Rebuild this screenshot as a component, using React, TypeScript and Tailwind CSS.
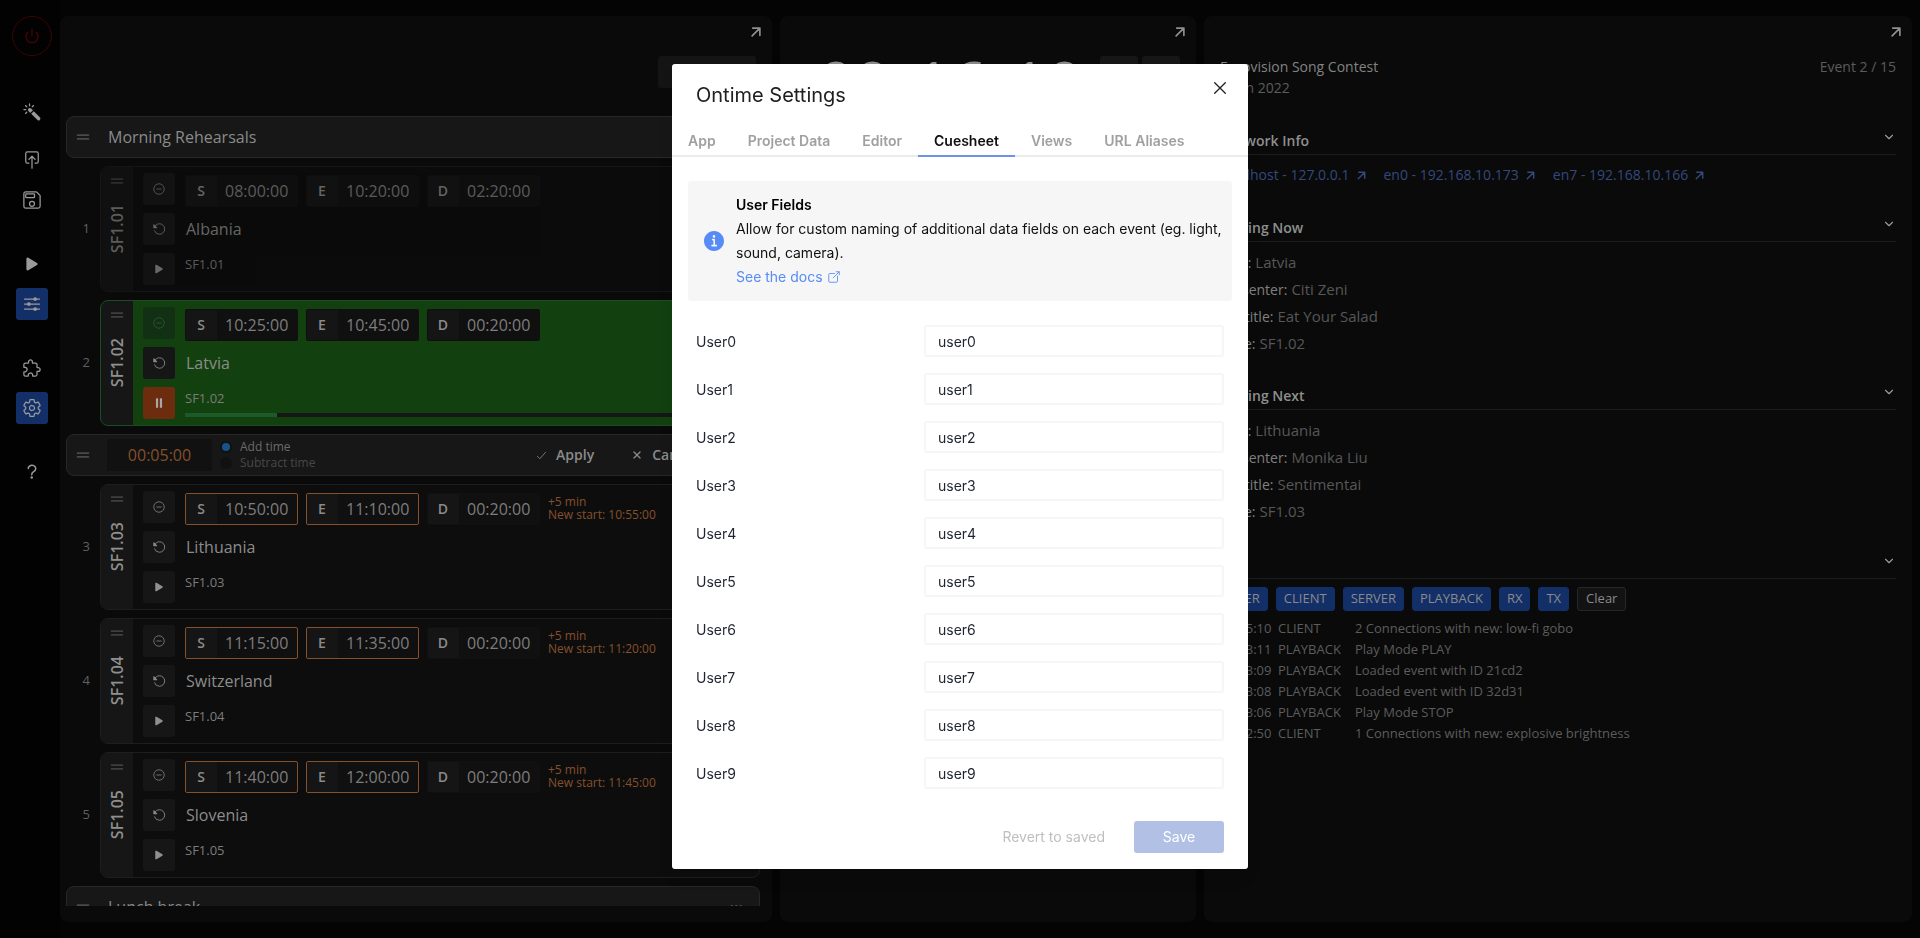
import React from 'react';
import { FiChevronDown, FiPower } from 'react-icons/fi';
import {
  IoArrowUp,
  IoCheckmark,
  IoClose,
  IoColorWand,
  IoExtensionPuzzleOutline,
  IoHelp,
  IoOpenOutline,
  IoOptions,
  IoPause,
  IoPlay,
  IoPushOutline,
  IoReload,
  IoRemoveCircleOutline,
  IoReorderTwo,
  IoSaveOutline,
  IoSettingsOutline,
} from 'react-icons/io5';

type RundownEvent = {
  index: number;
  cue: string;
  title: string;
  start: string;
  end: string;
  duration: string;
  state: 'past' | 'running' | 'next';
  newStart?: string;
};

const events: RundownEvent[] = [
  { index: 1, cue: 'SF1.01', title: 'Albania', start: '08:00:00', end: '10:20:00', duration: '02:20:00', state: 'past' },
  { index: 2, cue: 'SF1.02', title: 'Latvia', start: '10:25:00', end: '10:45:00', duration: '00:20:00', state: 'running' },
  { index: 3, cue: 'SF1.03', title: 'Lithuania', start: '10:50:00', end: '11:10:00', duration: '00:20:00', state: 'next', newStart: '10:55:00' },
  { index: 4, cue: 'SF1.04', title: 'Switzerland', start: '11:15:00', end: '11:35:00', duration: '00:20:00', state: 'next', newStart: '11:20:00' },
  { index: 5, cue: 'SF1.05', title: 'Slovenia', start: '11:40:00', end: '12:00:00', duration: '00:20:00', state: 'next', newStart: '11:45:00' },
];

const logs = [
  ['10:35:10', 'CLIENT', '2 Connections with new: low-fi gobo'],
  ['10:33:11', 'PLAYBACK', 'Play Mode PLAY'],
  ['10:33:09', 'PLAYBACK', 'Loaded event with ID 21cd2'],
  ['10:33:08', 'PLAYBACK', 'Loaded event with ID 32d31'],
  ['10:33:06', 'PLAYBACK', 'Play Mode STOP'],
  ['10:32:50', 'CLIENT', '1 Connections with new: explosive brightness'],
];

const tabs = ['App', 'Project Data', 'Editor', 'Cuesheet', 'Views', 'URL Aliases'];
const userFields = [0, 1, 2, 3, 4, 5, 6, 7, 8, 9];

function SideButton({ label, active, children }: { label: string; active?: boolean; children: React.ReactNode }) {
  return (
    <button
      aria-label={label}
      className={`flex size-8 items-center justify-center rounded-[3px] text-[#9a9a9a] ${active ? 'bg-[#132f68]' : ''}`}
    >
      {children}
    </button>
  );
}

function Sidebar() {
  return (
    <nav className="flex w-[60px] shrink-0 flex-col items-center bg-[#020202] pt-4 pl-1">
      <button
        aria-label="Shutdown"
        className="flex size-10 items-center justify-center rounded-full border border-[#3a0404] text-[#480404]"
      >
        <FiPower size={16} />
      </button>
      <div className="mt-10 flex flex-col items-center">
        <SideButton label="Quick actions"><IoColorWand size={20} /></SideButton>
        <div className="mt-4 flex flex-col gap-2">
          <SideButton label="Upload"><IoPushOutline size={20} /></SideButton>
          <SideButton label="Save project"><IoSaveOutline size={20} /></SideButton>
        </div>
        <div className="mt-8 flex flex-col gap-2">
          <SideButton label="Run mode"><IoPlay size={18} /></SideButton>
          <SideButton label="Edit mode" active><IoOptions size={20} /></SideButton>
        </div>
        <div className="mt-8 flex flex-col gap-2">
          <SideButton label="Integrations"><IoExtensionPuzzleOutline size={20} /></SideButton>
          <SideButton label="Settings" active><IoSettingsOutline size={20} /></SideButton>
        </div>
        <div className="mt-8">
          <SideButton label="Help"><IoHelp size={20} /></SideButton>
        </div>
      </div>
    </nav>
  );
}

function ExpandButton() {
  return (
    <button aria-label="Open in new window" className="mr-[6px] ml-auto flex size-5 items-center justify-center text-[#8f8f8f]">
      <IoArrowUp size={18} className="rotate-45" />
    </button>
  );
}

function TimeField({ letter, value, delayed }: { letter: string; value: string; delayed?: boolean }) {
  return (
    <label
      className={`flex h-8 w-[113px] overflow-hidden rounded-[2px] border bg-[#101010] ${
        delayed ? 'border-[#85502c]' : 'border-transparent'
      }`}
    >
      <span className="-my-px -ml-px flex w-8 shrink-0 items-center justify-center bg-[#161616]/80 text-sm font-semibold text-[#8a8a8a]">
        {letter}
      </span>
      <input
        defaultValue={value}
        className="min-w-0 flex-1 bg-transparent pl-2 text-base text-[#7d7d7d] outline-none"
      />
    </label>
  );
}

function CardButton({ label, className, children }: { label: string; className: string; children: React.ReactNode }) {
  return (
    <button aria-label={label} className={`flex size-8 items-center justify-center rounded-[3px] ${className}`}>
      {children}
    </button>
  );
}

function EventRow({ event }: { event: RundownEvent }) {
  const running = event.state === 'running';
  const past = event.state === 'past';
  const delayed = event.newStart !== undefined;
  return (
    <div className="flex items-stretch">
      <span className="flex w-[34px] shrink-0 items-center justify-end pr-[10px] text-[13px] text-[#606060]">
        {event.index}
      </span>
      <article
        className={`flex h-[126px] min-w-0 flex-1 overflow-hidden rounded-lg border ${
          running ? 'border-[#1b4d24] bg-[#12400f]' : past ? 'border-[#151515] bg-[#0b0b0b]' : 'border-[#1e1e1e] bg-[#0d0d0d]'
        }`}
      >
        <div className={`flex w-8 shrink-0 flex-col items-center pt-1 ${past ? 'bg-[#101010]' : 'bg-[#161616]'}`}>
          <IoReorderTwo size={20} className={past ? 'text-[#2c2c2c]' : 'text-[#3f3f3f]'} />
          <span
            className={`mt-[13px] rotate-180 text-base leading-5 font-semibold [writing-mode:vertical-rl] ${
              past ? 'text-[#5c5c5c]' : 'text-[#8f8f8f]'
            }`}
          >
            {event.cue}
          </span>
        </div>
        <div className={`flex min-w-0 flex-1 py-[6px] pl-[10px] ${past ? 'opacity-70' : ''}`}>
          <div className="flex flex-col gap-2">
            <CardButton label="Skip" className={running ? 'bg-[#113014] text-[#2c5a30]' : 'bg-[#161616] text-[#7a7a7a]'}>
              <IoRemoveCircleOutline size={14} />
            </CardButton>
            <CardButton label="Load" className="bg-[#161616] text-[#8a8a8a]">
              <IoReload size={14} className="-scale-x-100" />
            </CardButton>
            {running ? (
              <CardButton label="Pause" className="bg-[#6e2c0f] text-[#a8a8a8]">
                <IoPause size={14} />
              </CardButton>
            ) : (
              <CardButton label="Play" className="bg-[#161616] text-[#8f8f8f]">
                <IoPlay size={12} />
              </CardButton>
            )}
          </div>
          <div className="flex min-w-0 flex-1 flex-col pt-[2px] pl-[10px]">
            <div className="flex gap-2">
              <TimeField letter="S" value={event.start} delayed={delayed} />
              <TimeField letter="E" value={event.end} delayed={delayed} />
              <TimeField letter="D" value={event.duration} />
              {delayed && (
                <p className="pt-[2px] text-xs leading-[13px] whitespace-nowrap text-[#85502c]">
                  +5 min
                  <br />
                  New start: {event.newStart}
                </p>
              )}
            </div>
            <h3 className="mt-[10px] pl-px text-base leading-6 text-[#8c8c8c]">{event.title}</h3>
            <p className="mt-[13px] text-[13px] leading-5 text-[#7c7c7c]">{event.cue}</p>
            {running && (
              <div className="mt-[5px] h-1 bg-[#161616]">
                <div className="h-full w-[16%] bg-[#1c5a2a]" />
              </div>
            )}
          </div>
        </div>
      </article>
    </div>
  );
}

function BlockRow({ title }: { title: string }) {
  return (
    <div className="flex h-[42px] shrink-0 items-center rounded-lg border border-[#272727] bg-[#171717]">
      <IoReorderTwo size={20} className="ml-[6px] text-[#4a4a4a]" />
      <h2 className="ml-[15px] text-base text-[#8a8a8a]">{title}</h2>
      <span className="mr-4 ml-auto text-xs text-[#555555]">•••</span>
    </div>
  );
}

function DelayRow() {
  return (
    <div className="flex h-[42px] shrink-0 items-center rounded-lg border border-[#272727] bg-[#171717]">
      <IoReorderTwo size={20} className="ml-[6px] text-[#4a4a4a]" />
      <input
        aria-label="Delay time"
        defaultValue="00:05:00"
        className="ml-[14px] h-8 w-[105px] rounded-[2px] bg-[#111111] text-center text-base text-[#85502c] outline-none"
      />
      <fieldset className="ml-2 flex flex-col text-xs leading-4">
        <label className="flex items-center gap-2 text-[#6a6a6a]">
          <input type="radio" name="delay" defaultChecked className="size-3 appearance-none rounded-full border-2 border-[#111111] bg-[#17538a]" />
          Add time
        </label>
        <label className="flex items-center gap-2 text-[#484848]">
          <input type="radio" name="delay" className="size-3 appearance-none rounded-full bg-[#111111]" />
          Subtract time
        </label>
      </fieldset>
      <div className="mr-[62px] ml-auto flex gap-9 text-sm font-semibold text-[#8a8a8a]">
        <button className="flex items-center gap-2"><IoCheckmark size={13} />Apply</button>
        <button className="flex items-center gap-2"><IoClose size={14} />Cancel</button>
      </div>
    </div>
  );
}

function RundownPanel() {
  return (
    <section className="flex min-w-0 flex-col overflow-hidden rounded-lg bg-[#0a0a0a] pt-[6px] pb-4">
      <ExpandButton />
      <button className="mt-[14px] mr-4 ml-auto h-8 w-[98px] shrink-0 rounded-[3px] bg-[#141414] text-sm text-[#8a8a8a]">
        Event...
      </button>
      <div className="mt-7 flex min-h-0 flex-1 flex-col gap-2 overflow-hidden pr-3 pl-[6px]">
        <BlockRow title="Morning Rehearsals" />
        <EventRow event={events[0]} />
        <EventRow event={events[1]} />
        <DelayRow />
        <EventRow event={events[2]} />
        <EventRow event={events[3]} />
        <EventRow event={events[4]} />
        <BlockRow title="Lunch break" />
      </div>
    </section>
  );
}

function TimerPanel() {
  return (
    <section className="min-w-0 overflow-hidden rounded-lg bg-[#0a0a0a] pt-[6px]">
      <ExpandButton />
      <div className="mt-[10px] flex items-start pl-[38px]">
        <div className="flex gap-[3px] text-[64px] leading-none text-[#8a8a8a]">
          <span>00</span>
          <span>:</span>
          <span>16</span>
          <span>:</span>
          <span>10</span>
        </div>
        <div className="mt-1 mr-4 ml-auto flex gap-1">
          <button aria-label="Remove minute" className="h-8 w-[38px] rounded-[3px] bg-[#161616]" />
          <button aria-label="Add minute" className="h-8 w-[38px] rounded-[3px] bg-[#161616]" />
        </div>
      </div>
    </section>
  );
}

function SectionHeading({ title }: { title: string }) {
  return (
    <div className="flex h-7 items-start justify-between border-b border-[#1c1c1c]">
      <h2 className="pt-[2px] text-sm leading-6 font-semibold text-[#8f8f8f]">{title}</h2>
      <button aria-label="Collapse section" className="pt-[3px] text-[#9a9a9a]">
        <FiChevronDown size={14} />
      </button>
    </div>
  );
}

function InfoList({ rows }: { rows: [string, string][] }) {
  return (
    <dl className="flex flex-col pt-[7px] leading-[27px]">
      {rows.map(([name, value]) => (
        <div key={name} className="flex items-baseline gap-1">
          <dt className="text-sm leading-[27px] text-[#808080]">{name}:</dt>
          <dd className="text-[15px] text-[#575757]">{value}</dd>
        </div>
      ))}
    </dl>
  );
}

function NetworkLink({ children }: { children: string }) {
  return (
    <a href="#network" className="flex items-center gap-1">
      {children}
      <IoArrowUp size={15} className="rotate-45" />
    </a>
  );
}

function InfoPanel() {
  return (
    <section className="min-w-0 overflow-hidden rounded-lg bg-[#0a0a0a] pt-[6px]">
      <ExpandButton />
      <div className="mt-[14px] px-4">
        <div className="flex justify-between text-sm leading-[21px]">
          <h1 className="text-[#838383]">Eurovision Song Contest</h1>
          <span className="text-[#5c5c5c]">Event 2 / 15</span>
        </div>
        <p className="text-sm leading-[21px] text-[#5c5c5c]">Turin 2022</p>
        <div className="mt-[29px]">
          <SectionHeading title="Network Info" />
          <div className="mt-2 flex h-6 gap-[15px] text-sm text-[#33497c]">
            <NetworkLink>localhost - 127.0.0.1</NetworkLink>
            <NetworkLink>en0 - 192.168.10.173</NetworkLink>
            <NetworkLink>en7 - 192.168.10.166</NetworkLink>
          </div>
        </div>
        <div className="mt-[27px]">
          <SectionHeading title="Playing Now" />
          <InfoList
            rows={[
              ['Title', 'Latvia'],
              ['Presenter', 'Citi Zeni'],
              ['Subtitle', 'Eat Your Salad'],
              ['Note', 'SF1.02'],
            ]}
          />
        </div>
        <div className="mt-[25px]">
          <SectionHeading title="Playing Next" />
          <InfoList
            rows={[
              ['Title', 'Lithuania'],
              ['Presenter', 'Monika Liu'],
              ['Subtitle', 'Sentimentai'],
              ['Note', 'SF1.03'],
            ]}
          />
        </div>
        <div className="mt-[26px]">
          <SectionHeading title="Log" />
          <div className="mt-2 flex gap-2 text-[13px] text-[#8a8a8a]">
            {['USER', 'CLIENT', 'SERVER', 'PLAYBACK', 'RX', 'TX'].map((name) => (
              <button key={name} className="h-6 rounded-[3px] border border-[#132f68] bg-[#132f68] px-[7px]">
                {name}
              </button>
            ))}
            <button className="h-6 rounded-[3px] border border-[#272727] bg-[#131313] px-2">Clear</button>
          </div>
          <table className="mt-[7px] text-[13px] leading-[21px] text-[#5c5c5c]">
            <tbody>
              {logs.map(([time, origin, message]) => (
                <tr key={time}>
                  <td className="w-[58px] min-w-[58px] p-0">{time}</td>
                  <td className="w-[77px] min-w-[77px] p-0">{origin}</td>
                  <td className="p-0">{message}</td>
                </tr>
              ))}
            </tbody>
          </table>
        </div>
      </div>
    </section>
  );
}

function SettingsDialog() {
  return (
    <div className="fixed inset-0 z-10 flex items-start justify-center pt-16">
      <div
        role="dialog"
        aria-labelledby="settings-title"
        className="relative w-xl rounded-[3px] bg-white font-[Inter,sans-serif] text-sm shadow-lg"
      >
        <h1 id="settings-title" className="px-6 py-4 text-xl leading-[30px] text-[#202020]">
          Ontime Settings
        </h1>
        <button aria-label="Close" className="absolute top-2 right-3 flex size-8 items-center justify-center text-[#202020]">
          <svg viewBox="0 0 12 12" className="size-3" fill="none" stroke="currentColor" strokeWidth="1.3" strokeLinecap="round">
            <path d="M0.7 0.7 11.3 11.3M11.3 0.7 0.7 11.3" />
          </svg>
        </button>
        <div role="tablist" className="flex border-b-2 border-[#ececec]">
          {tabs.map((tab) => (
            <button
              key={tab}
              role="tab"
              aria-selected={tab === 'Cuesheet'}
              className={`-mb-[2px] border-b-2 px-4 pt-1 pb-1 leading-[21px] font-semibold ${
                tab === 'Cuesheet' ? 'border-[#6d92e6] text-[#101010]' : 'border-transparent text-[#a0a0a0]'
              }`}
            >
              {tab}
            </button>
          ))}
        </div>
        <div className="mx-4 mt-6 flex items-center gap-3 rounded-[3px] bg-[#f6f6f6] py-3 pr-1 pl-4 text-[#101010]">
          <svg viewBox="56 56 400 400" className="size-5 shrink-0 text-[#578bf6]" fill="currentColor">
            <path d="M256 56C145.72 56 56 145.72 56 256s89.72 200 200 200 200-89.72 200-200S366.28 56 256 56zm0 82a26 26 0 11-26 26 26 26 0 0126-26zm48 226h-88a16 16 0 010-32h28v-88h-16a16 16 0 010-32h32a16 16 0 0116 16v104h28a16 16 0 010 32z" />
          </svg>
          <div className="leading-6">
            <h2 className="font-semibold text-black">User Fields</h2>
            <p>Allow for custom naming of additional data fields on each event (eg. light, sound, camera).</p>
            <a href="#docs" className="inline-flex items-center gap-1 align-top text-[#578bf6]">
              See the docs
              <IoOpenOutline size={14} />
            </a>
          </div>
        </div>
        <form onSubmit={(event) => event.preventDefault()} className="px-6 pt-4 pb-4">
          {userFields.map((field) => (
            <div key={field} className="flex items-center justify-between py-2 text-[#1f2430]">
              <label htmlFor={`user${field}`} className="pt-[2px]">User{field}</label>
              <input
                id={`user${field}`}
                defaultValue={`user${field}`}
                className="h-8 w-[300px] rounded-[3px] border-2 border-[#f6f6f6] bg-white px-3 outline-none"
              />
            </div>
          ))}
          <div className="mt-6 flex items-center justify-end gap-[29px]">
            <button type="button" disabled className="text-[#bfbfbf]">Revert to saved</button>
            <button type="submit" disabled className="h-8 w-[90px] rounded-[3px] bg-[#b1c0e4] text-white">Save</button>
          </div>
        </form>
      </div>
    </div>
  );
}

export default function App() {
  return (
    <div className="flex h-screen overflow-hidden bg-[#040404] font-['Open_Sans',sans-serif]">
      <Sidebar />
      <main className="grid min-w-0 flex-1 grid-cols-[712fr_416fr_708fr] grid-rows-[minmax(0,1fr)] gap-2 py-4 pr-2">
        <RundownPanel />
        <TimerPanel />
        <InfoPanel />
      </main>
      <SettingsDialog />
    </div>
  );
}
